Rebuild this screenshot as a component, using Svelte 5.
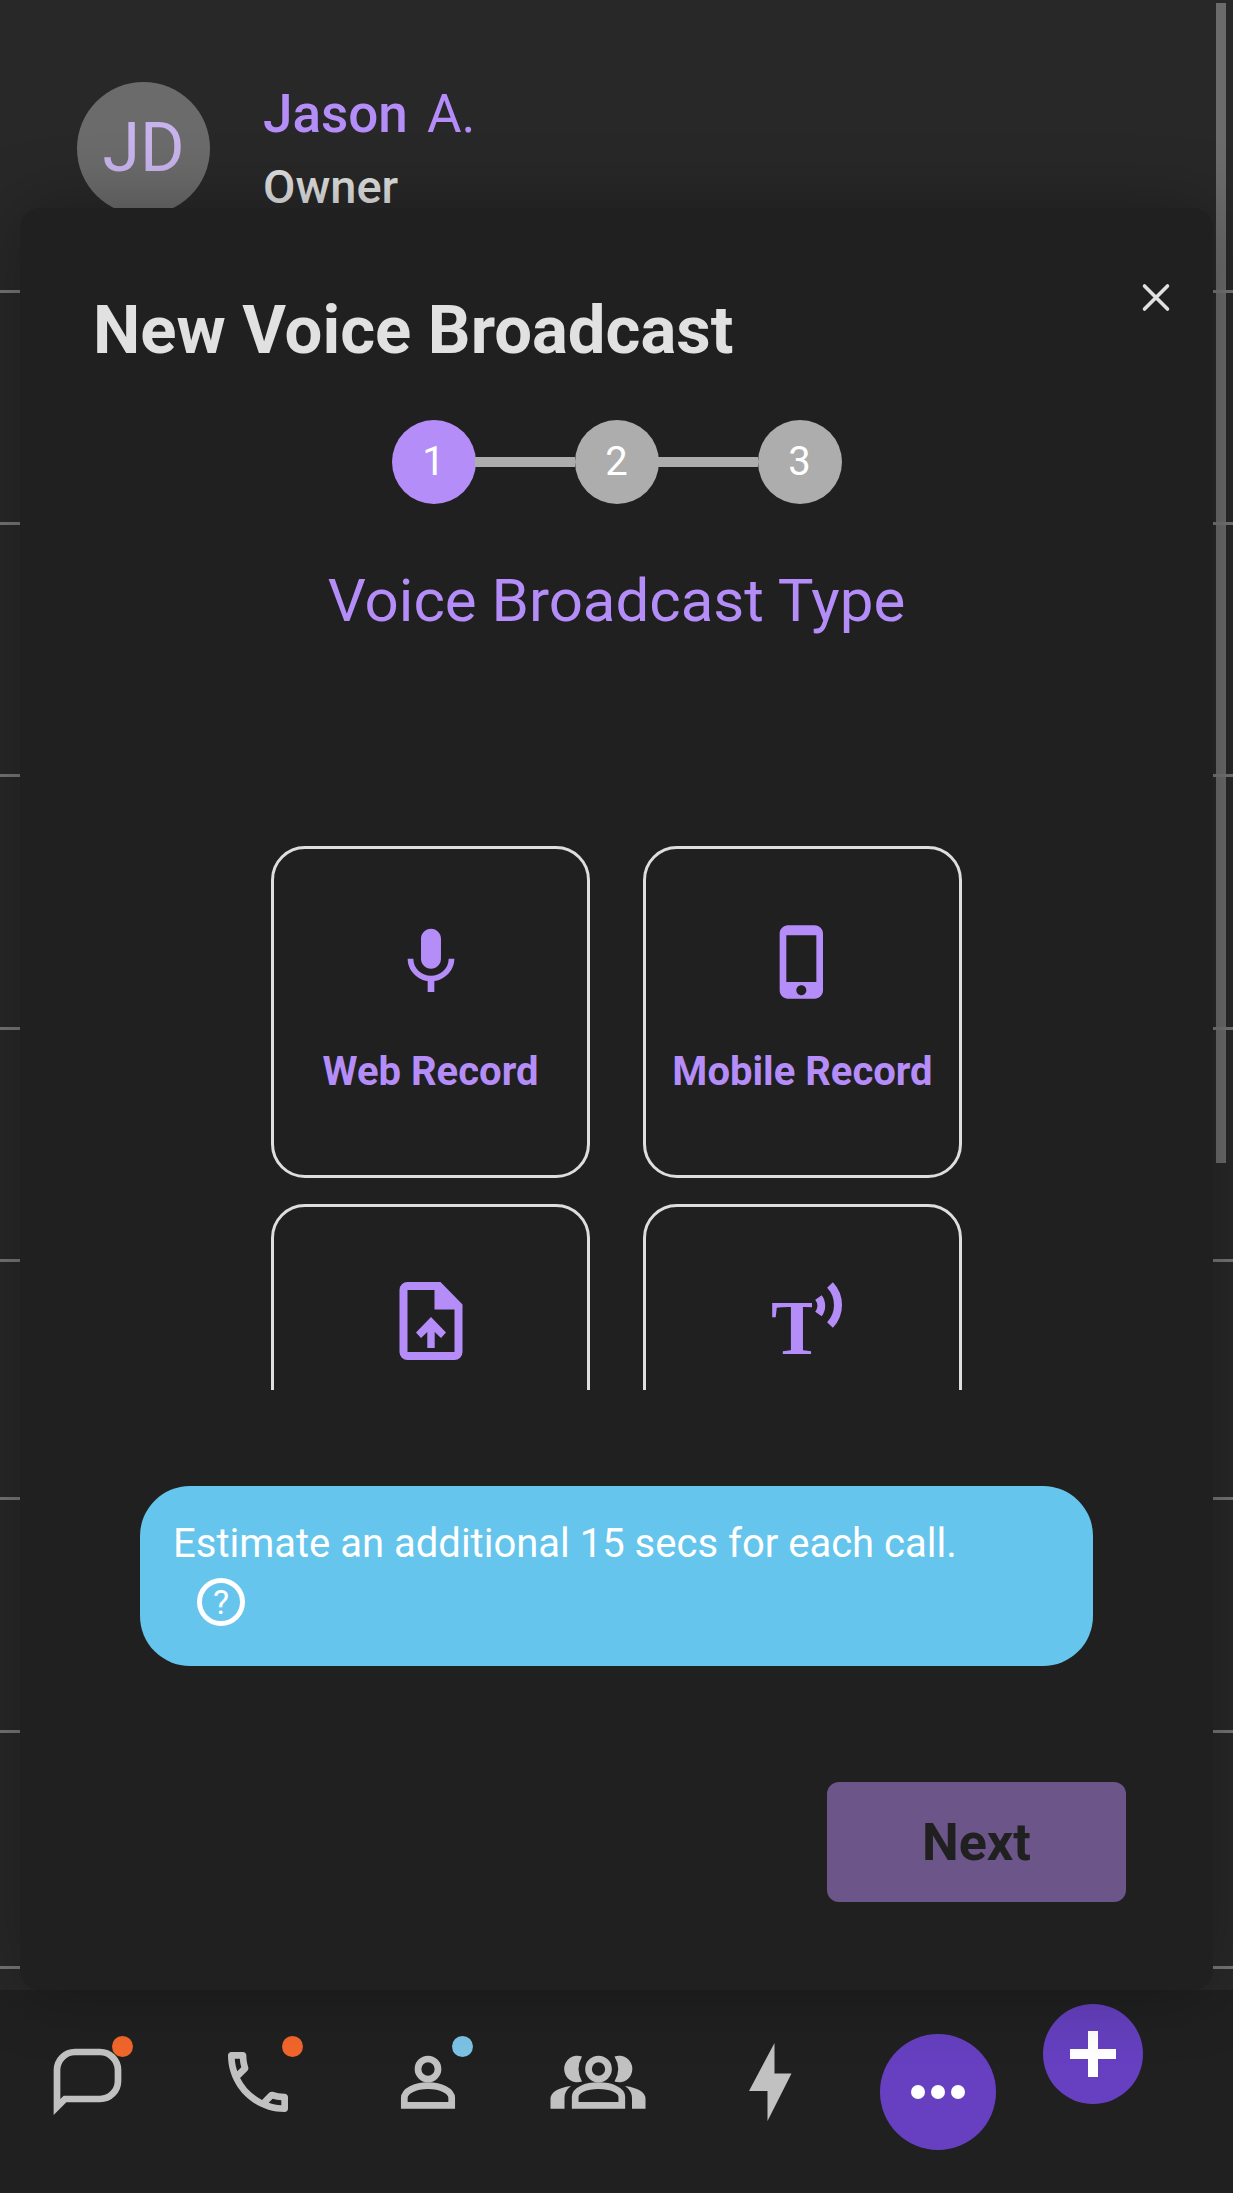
<script>
  const rows = [293, 232, 252, 253, 232, 238, 233, 236];
  const steps = [1, 2, 3];
  let current = $state(1);
</script>

<svelte:head><title>New Voice Broadcast</title></svelte:head>

<div class="screen">
  <div class="list">
    <div class="scrollbar"></div>
    {#each rows as height, i}
      <div class="row" style="height: {height}px">
        {#if i === 0}
          <div class="avatar">JD</div>
          <div class="who">
            <div class="name"><span class="first">Jason</span><span>A.</span></div>
            <div class="role">Owner</div>
          </div>
        {/if}
      </div>
    {/each}
  </div>

  <div class="dialog" role="dialog" aria-labelledby="dialog-title">
    <header>
      <h1 id="dialog-title">New Voice Broadcast</h1>
      <button class="close" aria-label="Close">
        <svg viewBox="0 0 40 40"><path d="M8.500 9L31.500 32M31.500 9L8.500 32" fill="none" stroke="currentColor" stroke-width="3.600" stroke-linecap="round" /></svg>
      </button>
    </header>

    <ol class="steps">
      {#each steps as step}
        <li class:active={step === current}>{step}</li>
      {/each}
    </ol>

    <h2>Voice Broadcast Type</h2>

    <div class="types">
      <button class="card">
        <svg viewBox="0 0 24 24"><path d="M12 14c1.660 0 2.990-1.340 2.990-3L15 5c0-1.660-1.340-3-3-3S9 3.340 9 5v6c0 1.660 1.340 3 3 3zm5.300-3c0 3-2.540 5.100-5.300 5.100S6.700 14 6.700 11H5c0 3.410 2.720 6.230 6 6.720V21h2v-3.280c3.280-.48 6-3.300 6-6.720h-1.700z" /></svg>
        <span>Web Record</span>
      </button>
      <button class="card">
        <svg viewBox="0 0 24 24"><path d="M15.500 1h-8C6.120 1 5 2.120 5 3.500v17C5 21.880 6.120 23 7.500 23h8c1.380 0 2.500-1.120 2.500-2.500v-17C18 2.120 16.880 1 15.500 1zm-4 21c-.83 0-1.500-.67-1.500-1.500s.67-1.500 1.500-1.500 1.500.67 1.500 1.500-.67 1.500-1.500 1.500zm4.500-4H7V4h9v14z" /></svg>
        <span>Mobile Record</span>
      </button>
      <button class="card" aria-label="Upload file">
        <svg viewBox="0 0 80 80">
          <path fill-rule="evenodd" d="M16.500 2H49.500L71.500 24.500V72a8 8 0 0 1-8 8h-47a8 8 0 0 1-8-8V10a8 8 0 0 1 8-8zM16.500 10V72H63.500V29.500H43.500V10z" />
          <path d="M40 37L55 52.500L50 58L43.700 52V68H36.300V52L30 58L25 52.500z" />
        </svg>
      </button>
      <button class="card" aria-label="Text to speech">
        <svg viewBox="0 0 80 80">
          <clipPath id="letter-edge"><rect x="0" y="0" width="49" height="80" /></clipPath>
          <g clip-path="url(#letter-edge)"><text x="34" y="74" text-anchor="middle" class="letter">T</text></g>
          <path d="M55.500 17.500a14 14 0 0 1 0 16.500M67 5a29 29 0 0 1 0 40" fill="none" stroke="currentColor" stroke-width="8" />
        </svg>
      </button>
    </div>

    <div class="info">
      <p>Estimate an additional 15 secs for each call.</p>
      <button class="help" aria-label="Help">?</button>
    </div>

    <button class="next">Next</button>
  </div>

  <nav>
    <a href="#messages" class="item" aria-label="Messages">
      <svg viewBox="0 0 80 80"><path d="M9 65V28A18 18 0 0 1 27 10H52A18 18 0 0 1 70 28V39A18 18 0 0 1 52 57H17Z" fill="none" stroke="currentColor" stroke-width="6.700" /></svg>
      <i class="dot"></i>
    </a>
    <a href="#calls" class="item" aria-label="Calls">
      <svg viewBox="0 0 24 24"><path d="M6.540 5c.06.89.21 1.760.45 2.590l-1.200 1.200c-.41-1.200-.67-2.470-.76-3.790h1.510m9.860 12.020c.85.24 1.720.39 2.600.45v1.490c-1.320-.09-2.590-.35-3.800-.75l1.200-1.190M7.500 3H4c-.55 0-1 .45-1 1 0 9.390 7.610 17 17 17 .55 0 1-.45 1-1v-3.490c0-.55-.45-1-1-1-1.240 0-2.450-.2-3.570-.57-.1-.04-.21-.05-.31-.05-.26 0-.51.1-.71.29l-2.200 2.200c-2.830-1.450-5.150-3.760-6.590-6.590l2.200-2.200c.28-.28.36-.67.25-1.020C8.700 6.450 8.500 5.250 8.500 4c0-.55-.45-1-1-1z" /></svg>
      <i class="dot"></i>
    </a>
    <a href="#contacts" class="item" aria-label="Contacts">
      <svg viewBox="0 0 80 80"><g fill="none" stroke="currentColor" stroke-width="6.700"><circle cx="40" cy="27" r="10" /><path d="M16.300 63.300V56C16.300 49 27 43.700 40 43.700S63.700 49 63.700 56V63.300Z" /></g></svg>
      <i class="dot blue"></i>
    </a>
    <a href="#groups" class="item" aria-label="Groups">
      <svg class="wide" viewBox="0 0 100 80">
        <g fill="none" stroke="currentColor" stroke-width="6.700"><circle cx="50.500" cy="27" r="10" /><path d="M27.200 63.300V55C27.200 48 38 43.700 50.500 43.700S73.800 48 73.800 55V63.300Z" /></g>
        <path d="M34 14.500A13.300 13.300 0 1 0 34 39.500Q27 27 34 14.500ZM66.500 14.500A13.300 13.300 0 1 1 66.500 39.500Q74 27 66.500 14.500ZM23 44Q2.500 47 2.500 57V66.700H16.500V56Q16.500 49 23 44ZM77 44Q97.500 47 97.500 57V66.700H84V56Q84 49 77 44Z" />
      </svg>
    </a>
    <a href="#activity" class="item" aria-label="Activity">
      <svg viewBox="0 0 80 80"><path d="M46.500 1V31.500H63.500L39.500 79V49H21Z" /></svg>
    </a>
    <button class="more" aria-label="More">
      <svg viewBox="0 0 80 80"><circle cx="20" cy="40" r="7" /><circle cx="40" cy="40" r="7" /><circle cx="60" cy="40" r="7" /></svg>
    </button>
    <button class="add" aria-label="Add">
      <svg viewBox="0 0 80 80"><path d="M17 35H35V17H45V35H63V45H45V63H35V45H17Z" /></svg>
    </button>
  </nav>
</div>

<style>
  :global(body) {
    margin: 0;
    background: #202020;
  }
  .screen {
    display: grid;
    grid-template-columns: minmax(0, 1fr);
    grid-template-rows: auto auto;
    min-height: 100vh;
    overflow: hidden;
    font-family: Roboto, "Liberation Sans", sans-serif;
    color: #e1e1e1;
  }
  button {
    font: inherit;
    color: inherit;
    border: 0;
    padding: 0;
    background: none;
    cursor: pointer;
  }
  svg {
    display: block;
    fill: currentColor;
    flex: none;
  }
  .list {
    grid-area: 1 / 1;
    position: relative;
    background: #282828;
  }
  .scrollbar {
    position: absolute;
    top: 3px;
    right: 7px;
    width: 10px;
    height: 58.3%;
    background: #6b6b6b;
  }
  .row {
    position: relative;
    box-sizing: border-box;
    border-bottom: 3px solid #757575;
    display: flex;
    align-items: flex-start;
    gap: 53px;
    padding: 82px 77px 0;
  }
  .avatar {
    width: 133px;
    height: 133px;
    line-height: 132px;
    border-radius: 50%;
    background: #6b6b6b;
    color: #c8b4ec;
    font-size: 68px;
    text-align: center;
  }
  .name {
    display: flex;
    gap: 19px;
    font-size: 53px;
    line-height: 64px;
    color: #b58df8;
  }
  .first {
    font-weight: 500;
  }
  .role {
    margin-top: 13px;
    font-size: 47px;
    line-height: 56px;
    font-weight: 500;
    color: #dedede;
  }
  .dialog {
    grid-area: 1 / 1;
    z-index: 1;
    display: flex;
    flex-direction: column;
    margin: 208px 20px 0;
    padding-bottom: 88px;
    border-radius: 20px;
    background: #202020;
    box-shadow: 0 0 70px rgba(0, 0, 0, 0.3);
  }
  header {
    display: flex;
    justify-content: space-between;
    align-items: flex-start;
    padding: 69px 37px 0 73px;
  }
  h1 {
    margin: 13px 0 0;
    font-size: 67px;
    line-height: 80px;
    font-weight: 700;
  }
  .close,
  .close svg {
    width: 40px;
    height: 40px;
  }
  .steps {
    display: flex;
    justify-content: center;
    gap: 99px;
    margin: 50px 0 0;
    padding: 0;
    list-style: none;
  }
  .steps li {
    position: relative;
    width: 84px;
    height: 84px;
    border-radius: 50%;
    background: #adadad;
    color: #fff;
    font-size: 40px;
    line-height: 84px;
    text-align: center;
  }
  .steps li.active {
    background: #b58df8;
  }
  .steps li + li::before {
    content: "";
    position: absolute;
    top: 37px;
    right: 100%;
    width: 100px;
    height: 10px;
    background: #adadad;
  }
  h2 {
    margin: 61px 0 0;
    font-size: 60px;
    line-height: 72px;
    font-weight: 400;
    text-align: center;
    color: #b58df8;
  }
  .types {
    display: grid;
    grid-template-columns: repeat(2, minmax(0, 319px));
    justify-content: center;
    gap: 26px 53px;
    height: 544px;
    margin-top: 209px;
    overflow: hidden;
  }
  .card {
    box-sizing: border-box;
    display: flex;
    flex-direction: column;
    align-items: center;
    height: 332px;
    padding-top: 73px;
    border: 3px solid #dedede;
    border-radius: 34px;
    color: #b58df8;
  }
  .card svg {
    width: 80px;
    height: 80px;
    overflow: visible;
  }
  .card span {
    margin-top: 46px;
    font-size: 40px;
    line-height: 48px;
    font-weight: 700;
  }
  .letter {
    font: 700 78px "Liberation Serif", serif;
  }
  .info {
    margin: 96px 120px 0;
    padding: 29px 33px 35px;
    border-radius: 50px;
    background: #66c5ec;
    color: #fff;
    font-size: 40px;
    line-height: 58px;
  }
  p {
    margin: 0;
  }
  .help {
    display: block;
    box-sizing: border-box;
    width: 48px;
    height: 48px;
    margin: 5px 24px;
    border: 5px solid #fff;
    border-radius: 50%;
    font-size: 34px;
    line-height: 38px;
  }
  .next {
    align-self: flex-end;
    width: 299px;
    height: 120px;
    margin: 116px 87px 0 0;
    border-radius: 12px;
    background: #6b5589;
    color: #202020;
    font-size: 52px;
    font-weight: 700;
  }
  nav {
    display: grid;
    grid-template-columns: repeat(6, minmax(0, 170fr)) minmax(0, 140fr) minmax(0, 70fr);
    align-items: center;
    justify-items: center;
    height: 203px;
    padding-left: 3px;
    background: #202020;
    color: #c1c1c1;
  }
  .item {
    position: relative;
    margin-bottom: 20px;
    color: inherit;
  }
  nav svg {
    width: 80px;
    height: 80px;
  }
  nav svg.wide {
    width: 100px;
  }
  .dot {
    position: absolute;
    top: -6px;
    right: -5px;
    width: 21px;
    height: 21px;
    border-radius: 50%;
    background: #f1662b;
  }
  .dot.blue {
    background: #7cc3e6;
  }
  .more,
  .add {
    display: grid;
    place-items: center;
    border-radius: 50%;
    background: #6640c0;
    color: #fff;
  }
  .more {
    width: 116px;
    height: 116px;
  }
  .add {
    width: 100px;
    height: 100px;
    margin-bottom: 76px;
  }
</style>
